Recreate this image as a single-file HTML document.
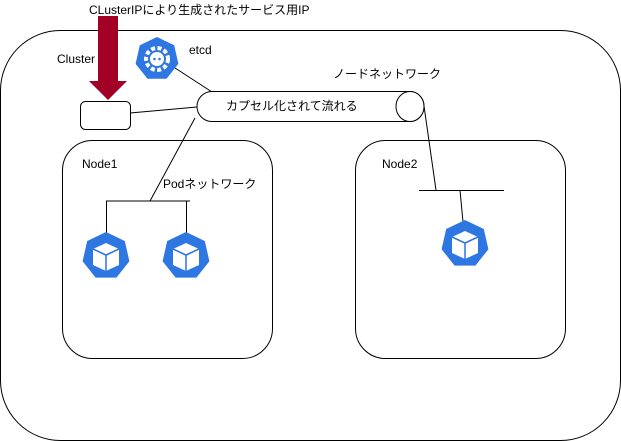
<!DOCTYPE html>
<html><head><style>body{margin:0;background:#fff}svg{display:block}text{font-family:"Liberation Sans","Noto Sans CJK JP",sans-serif;font-size:12px;fill:#000}</style></head><body>
<svg width="621" height="441" viewBox="0 0 621 441">
<defs>
<g id="cube">
<polygon points="0,-24 18.8,-15 23.4,5.3 10.4,21.6 -10.4,21.6 -23.4,5.3 -18.8,-15" fill="#2e77e2"/>
<polygon points="0,-13 13,-7 13,9 0,15 -13,9 -13,-7" fill="#fff"/>
<polyline points="-13,-7 0,-1 13,-7 M0,-1 0,15" fill="none" stroke="#2e77e2" stroke-width="1.5"/>
<path d="M-13,-7 L0,-1 L13,-7 M0,-1 L0,15" fill="none" stroke="#2e77e2" stroke-width="1.5"/>
</g>
</defs>
<rect x="0.5" y="30.5" width="620" height="410" rx="60" fill="none" stroke="#000"/>
<rect x="62.5" y="140.5" width="210" height="218" rx="30" fill="none" stroke="#000"/>
<rect x="355.5" y="140.5" width="210" height="218" rx="30" fill="none" stroke="#000"/>
<text x="89" y="14">CLusterIPにより生成されたサービス用IP</text>
<text x="57" y="63">Cluster</text>
<text x="189" y="54">etcd</text>
<text x="333" y="78">ノードネットワーク</text>
<text x="82" y="168">Node1</text>
<text x="382" y="168">Node2</text>
<text x="163" y="188">Podネットワーク</text>
<rect x="98" y="16" width="20" height="66" fill="#a20025"/>
<polygon points="89,81 127,81 108,100" fill="#a20025"/>
<rect x="80.5" y="101.5" width="50" height="28" rx="5" fill="#fff" stroke="#000"/>
<path d="M130,113 L197,107 M172,66 L212,92 M195,118 L150,201 M106,201 L190,201 M106.5,201 V233 M186.5,201 V233 M424,106 L436,190 M419,190.5 H504 M460,190 L463,222" stroke="#000" fill="none"/>
<path d="M212,91.5 H410 A14,15 0 0 1 410,121.5 H212 A15,15 0 0 1 212,91.5 Z" fill="#fff" stroke="#000"/>
<ellipse cx="410" cy="106.5" rx="14" ry="15" fill="#fff" stroke="#000"/>
<text x="226" y="110">カプセル化されて流れる</text>
<g transform="translate(157,59)">
<polygon points="0,-22 17.2,-13.7 21.4,4.9 9.5,19.8 -9.5,19.8 -21.4,4.9 -17.2,-13.7" fill="#2e77e2"/>
<circle r="11" fill="none" stroke="#fff" stroke-width="4" stroke-dasharray="4 2.5"/>
<circle r="7" fill="#fff"/>
<circle cx="-2.5" cy="0" r="1.3" fill="#2e77e2"/><circle cx="2.5" cy="0" r="1.3" fill="#2e77e2"/>
</g>
<use href="#cube" x="106" y="256"/>
<use href="#cube" x="186" y="256"/>
<use href="#cube" x="465" y="244"/>
</svg>
</body></html>
